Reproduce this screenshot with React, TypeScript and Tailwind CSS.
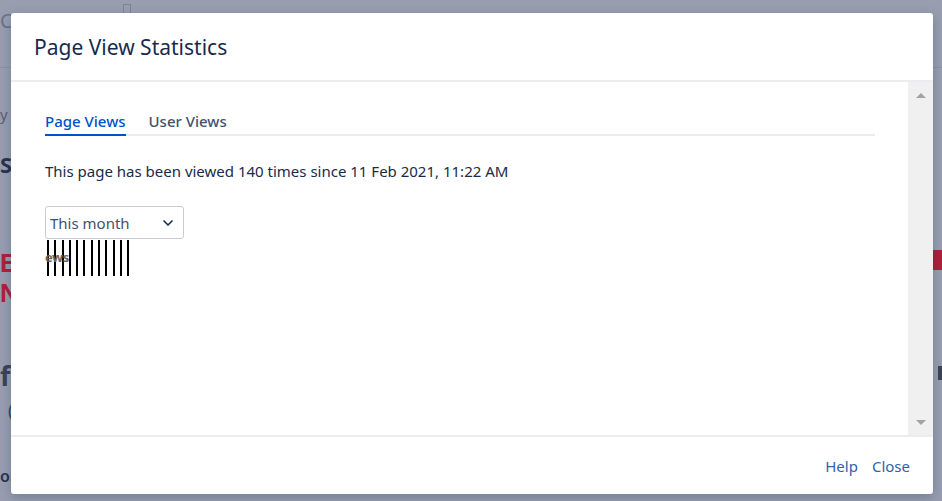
import { ChevronDown } from 'lucide-react'

const font = { fontFamily: '"Noto Sans", "Open Sans", Arial, sans-serif' }

function BrokenChart() {
  const lines = Array.from({ length: 12 })
  return (
    <div className="relative mt-[1px] h-[36px] w-[90px]">
      <div className="flex h-full gap-[5.3px] pl-[2px]">
        {lines.map((_, i) => (
          <div key={i} className="h-full w-[2px] bg-black" />
        ))}
      </div>
      <span className="absolute left-0 top-[9px] text-[13px] font-bold leading-[16px] tracking-[-0.5px] text-[#666]">ews</span>
    </div>
  )
}

function Backdrop() {
  return (
    <div className="h-full w-full bg-[#989eb0]">
      <div className="flex h-[68px] items-start border-b border-[#8e94a6] pt-[8px]">
        <span className="text-[20px] leading-[26px] text-[#6d7385]">C</span>
        <span className="ml-[110px] mt-[-4px] h-[10px] w-[8px] border border-[#7d8395]" />
      </div>
      <div className="pt-[36px] text-[15px] leading-[20px] text-[#5a6072]">y</div>
      <div className="pt-[26px] text-[22px] font-bold leading-[28px] text-[#2a3350]">S</div>
      <div className="flex justify-between pt-[70px] text-[26px] font-bold leading-[30px] text-[#b0203a]">
        <span className="font-['Liberation_Sans',Arial,sans-serif]">
          E
          <br />N
        </span>
        <span className="mr-[-4px] mt-[2px] block h-[20px] w-[13px] bg-[#b0203a]" />
      </div>
      <div className="flex justify-between pt-[52px] text-[27px] font-bold leading-[32px] text-[#3d4456]">
        <span>f</span>
        <span className="mr-[-2px] mt-[6px] block h-[14px] w-[6px] bg-[#3d4456]" />
      </div>
      <div className="pl-[8px] pt-[6px] text-[18px] leading-[24px] text-[#3d4456]">(</div>
      <div className="pt-[44px] text-[16px] font-semibold leading-[20px] text-[#2a3350]">on</div>
    </div>
  )
}

export default function App() {
  return (
    <div className="relative h-[501px] w-full overflow-hidden" style={font}>
      <Backdrop />
      <div className="absolute left-[11px] top-[13px] flex h-[481px] w-[922px] flex-col rounded-[3px] bg-white shadow-[0_4px_12px_rgba(9,30,66,0.25)]">
        <div className="flex h-[69px] shrink-0 items-center border-b-2 border-[#ebecf0] pl-[23px]">
          <h1 className="text-[21px] font-normal leading-[26px] text-[#172b4d]">Page View Statistics</h1>
        </div>

        <div className="flex min-h-0 flex-1">
          <div className="flex-1 pl-[34px] pr-[33px]">
            <div className="flex gap-[23px] border-b-2 border-[#ebecf0] pt-[29px]">
              <button
                type="button"
                className="mb-[-2px] border-b-2 border-[#0052cc] pb-[3px] text-[15px] font-medium leading-[20px] text-[#0052cc]"
              >
                Page Views
              </button>
              <button type="button" className="pb-[3px] text-[15px] font-medium leading-[20px] text-[#42526e]">
                User Views
              </button>
            </div>

            <p className="mt-[25px] text-[15px] leading-[20px] text-[#172b4d]">
              This page has been viewed 140 times since 11 Feb 2021, 11:22 AM
            </p>

            <div className="mt-[25px] flex h-[33px] w-[139px] items-center justify-between rounded-[3px] border border-[#c9ccd3] pl-[4px] pr-[7px]">
              <span className="text-[15px] leading-[20px] text-[#42526e]">This month</span>
              <ChevronDown size={16} strokeWidth={2.5} className="text-[#172b4d]" />
            </div>

            <BrokenChart />
          </div>

          <div className="flex w-[25px] shrink-0 flex-col items-center justify-between bg-[#f0f0f0] pb-[10px] pt-[11px]">
            <span className="block h-0 w-0 border-x-[5px] border-b-[5px] border-x-transparent border-b-[#a3a3a3]" />
            <span className="block h-0 w-0 border-x-[5px] border-t-[5px] border-x-transparent border-t-[#a3a3a3]" />
          </div>
        </div>

        <div className="flex h-[59px] shrink-0 items-center justify-end gap-[14px] border-t-2 border-[#ebecf0] pr-[23px]">
          <a className="text-[15px] leading-[20px] text-[#2f62b0]">Help</a>
          <a className="text-[15px] leading-[20px] text-[#2f62b0]">Close</a>
        </div>
      </div>
    </div>
  )
}
